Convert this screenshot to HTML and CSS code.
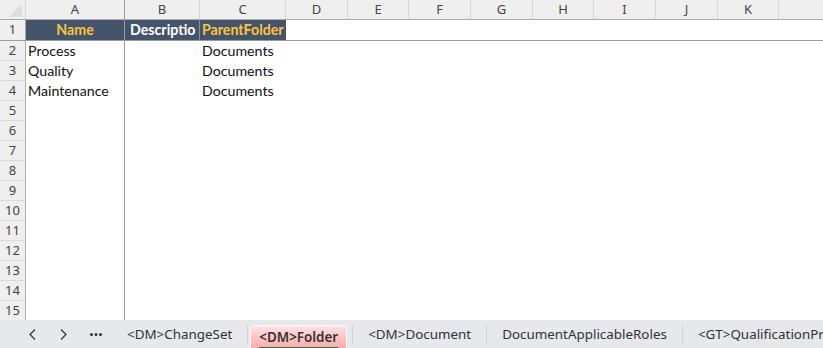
FILE: index.html
```html
<!DOCTYPE html>
<html lang="en">
<head>
    <meta charset="UTF-8">
    <title>Folder sheet</title>
    <link rel="stylesheet" href="styles.css">
</head>
<body>
    <div class="sheet">
        <div class="colheads">
            <div class="corner">
                <svg width="25" height="19" viewBox="0 0 25 19"><polygon points="22,4 22,17 9,17" fill="#dcdcdc"/></svg>
            </div>
            <div class="ch a">A</div>
            <div class="ch b">B</div>
            <div class="ch c">C</div>
            <div class="ch w62">D</div>
            <div class="ch w61">E</div>
            <div class="ch w62">F</div>
            <div class="ch w62">G</div>
            <div class="ch w61">H</div>
            <div class="ch w62">I</div>
            <div class="ch w62">J</div>
            <div class="ch w61">K</div>
            <div class="ch rest"></div>
        </div>

        <div class="row r1">
            <div class="rh">1</div>
            <div class="cell a hd center">Name</div>
            <div class="cell b hd light">Descriptio</div>
            <div class="cell c hd">ParentFolder</div>
        </div>
        <div class="row">
            <div class="rh">2</div>
            <div class="cell a">Process</div>
            <div class="cell b"></div>
            <div class="cell c">Documents</div>
        </div>
        <div class="row">
            <div class="rh">3</div>
            <div class="cell a">Quality</div>
            <div class="cell b"></div>
            <div class="cell c">Documents</div>
        </div>
        <div class="row">
            <div class="rh">4</div>
            <div class="cell a">Maintenance</div>
            <div class="cell b"></div>
            <div class="cell c">Documents</div>
        </div>
        <div class="row"><div class="rh">5</div><div class="cell a"></div></div>
        <div class="row"><div class="rh">6</div><div class="cell a"></div></div>
        <div class="row"><div class="rh">7</div><div class="cell a"></div></div>
        <div class="row"><div class="rh">8</div><div class="cell a"></div></div>
        <div class="row"><div class="rh">9</div><div class="cell a"></div></div>
        <div class="row"><div class="rh">10</div><div class="cell a"></div></div>
        <div class="row"><div class="rh">11</div><div class="cell a"></div></div>
        <div class="row"><div class="rh">12</div><div class="cell a"></div></div>
        <div class="row"><div class="rh">13</div><div class="cell a"></div></div>
        <div class="row"><div class="rh">14</div><div class="cell a"></div></div>
        <div class="row"><div class="rh">15</div><div class="cell a"></div></div>
    </div>

    <div class="tabbar">
        <div class="nav">
            <svg width="32" height="28" viewBox="0 0 32 28"><path d="M19 9.5 L14 14.5 L19 19.5" fill="none" stroke="#333" stroke-width="1.2"/></svg>
        </div>
        <div class="nav">
            <svg width="32" height="28" viewBox="0 0 32 28"><path d="M13 9.5 L18 14.5 L13 19.5" fill="none" stroke="#333" stroke-width="1.2"/></svg>
        </div>
        <div class="nav">
            <svg width="32" height="28" viewBox="0 0 32 28"><circle cx="11.5" cy="14.5" r="1.5" fill="#333"/><circle cx="16" cy="14.5" r="1.5" fill="#333"/><circle cx="20.5" cy="14.5" r="1.5" fill="#333"/></svg>
        </div>
        <div class="tab first">&lt;DM&gt;ChangeSet</div>
        <div class="sep"></div>
        <div class="tab active"><span>&lt;DM&gt;Folder</span></div>
        <div class="sep"></div>
        <div class="tab">&lt;DM&gt;Document</div>
        <div class="sep"></div>
        <div class="tab">DocumentApplicableRoles</div>
        <div class="sep"></div>
        <div class="tab">&lt;GT&gt;QualificationPr</div>
    </div>
</body>
</html>
```

FILE: styles.css
```css
body {
    margin: 0;
    width: 823px;
    height: 348px;
    overflow: hidden;
    background-color: #fff;
    font-family: Lato, "Liberation Sans", sans-serif;
}

.sheet {
    height: 320px;
    overflow: hidden;
}

.colheads {
    display: flex;
    height: 20px;
    background-color: #efefef;
    border-bottom: 1px solid #ababab;
    box-sizing: border-box;
}

.corner {
    width: 26px;
    flex: none;
    border-right: 1px solid #d6d6d6;
    box-sizing: border-box;
}

.corner svg {
    display: block;
}

.ch {
    flex: none;
    box-sizing: border-box;
    border-right: 1px solid #d6d6d6;
    text-align: center;
    font-family: "Noto Sans", sans-serif;
    font-size: 13px;
    line-height: 19px;
    color: #444;
}

.ch.a {
    border-right-color: #9b9b9b;
}

.w62 { width: 62px; }
.w61 { width: 61px; }
.ch.rest { flex: 1; border-right: none; }

.row {
    display: flex;
    height: 20px;
}

.row.r1 {
    border-bottom: 1px solid #9b9b9b;
}

.rh {
    width: 26px;
    flex: none;
    box-sizing: border-box;
    background-color: #efefef;
    border-right: 1px solid #ababab;
    border-bottom: 1px solid #dadada;
    text-align: center;
    font-family: "Noto Sans", sans-serif;
    font-size: 13px;
    line-height: 19px;
    color: #444;
}

.r1 .rh {
    border-bottom: none;
}

.cell {
    flex: none;
    box-sizing: border-box;
    padding-left: 2px;
    font-size: 14.2px;
    line-height: 20px;
    color: #111;
    white-space: nowrap;
    overflow: hidden;
}

.a { width: 99px; }
.b { width: 75px; }
.c { width: 86px; }

.cell.a {
    border-right: 1px solid #9b9b9b;
}

.cell.hd {
    background-color: #44546a;
    color: #fcc33f;
    font-weight: bold;
    line-height: 19px;
}

.cell.center {
    text-align: center;
    padding-left: 0;
}

.cell.light {
    color: #fff;
    padding-left: 5px;
    border-right: 1px solid #8390a2;
}

.tabbar {
    display: flex;
    align-items: center;
    height: 28px;
    padding-left: 16px;
    background-color: #e6e8eb;
    font-family: "Noto Sans", sans-serif;
    font-size: 13.4px;
    color: #333;
    white-space: nowrap;
    overflow: hidden;
}

.nav {
    flex: none;
    width: 32px;
    height: 28px;
}

.nav svg {
    display: block;
}

.tab {
    flex: none;
    padding: 0 15px;
    line-height: 28px;
}

.tab.first {
    padding-left: 15px;
}

.sep {
    flex: none;
    width: 1px;
    height: 19px;
    background-color: #cfd1d4;
}

.tab.active {
    margin: 4px 5px 0 2px;
    padding: 0 8px;
    height: 23px;
    line-height: 22px;
    box-sizing: border-box;
    border: 1px solid #fff;
    border-bottom: none;
    border-radius: 5px 5px 0 0;
    background: linear-gradient(#ffe3e3, #ffa9a9);
    font-weight: 600;
}

.tab.active span {
    display: inline-block;
    line-height: 19px;
    border-bottom: 2px solid #1e7b45;
}
```
